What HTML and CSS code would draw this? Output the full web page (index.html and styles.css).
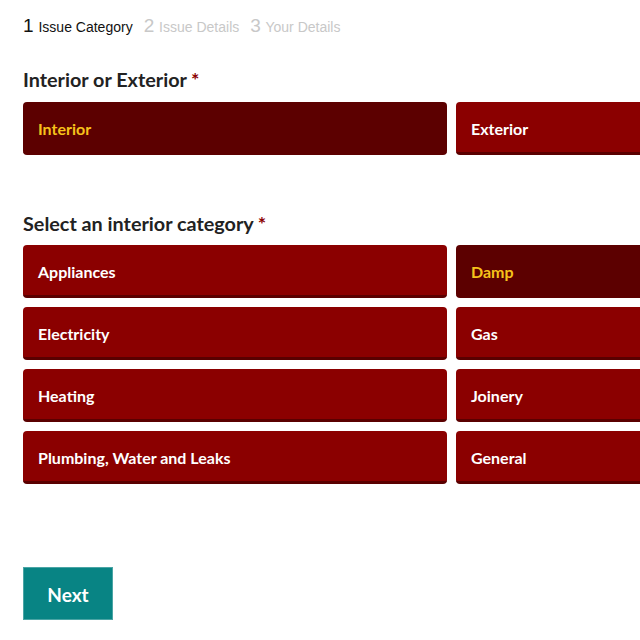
FILE: index.html
```html
<!DOCTYPE html>
<html>
<head>
<meta charset="utf-8">
<link rel="stylesheet" href="styles.css">
</head>
<body>
<div class="page">
  <ol class="steps">
    <li class="step active"><span class="num">1</span> Issue Category</li>
    <li class="step"><span class="num">2</span> Issue Details</li>
    <li class="step"><span class="num">3</span> Your Details</li>
  </ol>

  <section class="group">
    <h2 class="label">Interior or Exterior<span class="req">*</span></h2>
    <div class="options">
      <button class="opt selected">Interior</button>
      <button class="opt">Exterior</button>
    </div>
  </section>

  <section class="group second">
    <h2 class="label">Select an interior category<span class="req">*</span></h2>
    <div class="options">
      <button class="opt">Appliances</button>
      <button class="opt selected">Damp</button>
      <button class="opt">Electricity</button>
      <button class="opt">Gas</button>
      <button class="opt">Heating</button>
      <button class="opt">Joinery</button>
      <button class="opt">Plumbing, Water and Leaks</button>
      <button class="opt">General</button>
    </div>
  </section>

  <button class="next">Next</button>
</div>
</body>
</html>
```
FILE: styles.css
```css
html, body {
  margin: 0;
  padding: 0;
  overflow: hidden;
  background: #fff;
}
.page {
  width: 900px;
  padding: 14px 0 0 23px;
  font-family: Lato, "Open Sans", sans-serif;
}
.steps {
  list-style: none;
  margin: 0;
  padding: 0;
  display: flex;
  gap: 11px;
  font-family: "Liberation Sans", Arial, sans-serif;
  font-size: 14px;
  color: #c8c8c8;
  line-height: 24px;
}
.steps .num {
  font-size: 19px;
  margin-right: 1px;
}
.steps .active {
  color: #111;
}
.group {
  margin-top: 29px;
}
.group.second {
  margin-top: 57px;
}
.label {
  margin: 0 0 12px;
  font-size: 19.8px;
  font-weight: 700;
  color: #222;
  line-height: 22px;
}
.second .label {
  margin-bottom: 11px;
}
.req {
  color: #8b0000;
  margin-left: 4px;
}
.options {
  display: grid;
  grid-template-columns: 424px 424px;
  gap: 9px;
}
.opt {
  height: 53px;
  box-sizing: border-box;
  border: none;
  border-bottom: 3px solid #5a0000;
  border-radius: 4px;
  background: #8b0000;
  color: #fff;
  font-family: Lato, "Open Sans", sans-serif;
  font-weight: 700;
  font-size: 16px;
  text-align: left;
  padding: 2px 15px 0;
  cursor: pointer;
}
.opt.selected {
  background: #5c0000;
  border-bottom-color: #5c0000;
  color: #f6c21b;
}
.next {
  margin-top: 83px;
  width: 90px;
  height: 53px;
  border: 1px solid #4aa5a5;
  background: #088484;
  color: #fff;
  font-family: Lato, "Open Sans", sans-serif;
  font-weight: 700;
  font-size: 19px;
  padding: 2px 0 0;
}
```
